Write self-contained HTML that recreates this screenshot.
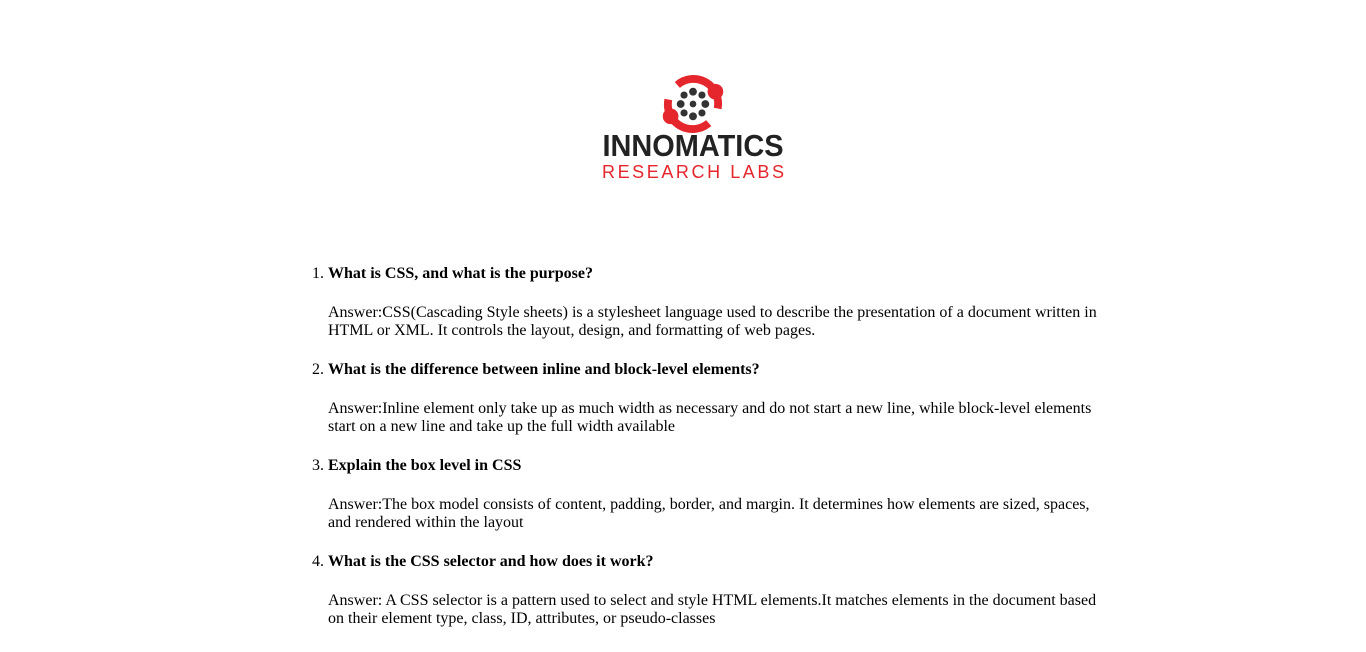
<!DOCTYPE html>
<html><head><meta charset="utf-8"><style>
body{margin:0;background:#fff;font-family:"Liberation Serif",serif;font-size:16px;color:#000;width:1366px;height:652px;overflow:hidden;position:relative}
.logo{position:absolute;left:598px;top:74px;width:190px;height:110px}
ol{position:absolute;left:288px;top:244px;width:812px;margin:0;padding:0 0 0 40px;box-sizing:border-box;line-height:18px}
h4{font-size:16px;margin:21px 0;line-height:18px}
p{margin:0;line-height:18px}
</style></head><body>
<svg class="logo" viewBox="0 0 190 110" xmlns="http://www.w3.org/2000/svg">
 <g transform="translate(95,30) scale(1.12)">
  <path d="M-22,-4 A22,22 0 0 0 14,17" fill="none" stroke="#e5262d" stroke-width="7"/>
  <path d="M22,4 A22,22 0 0 0 -14,-17" fill="none" stroke="#e5262d" stroke-width="7"/>
  <circle cx="-20" cy="11" r="7" fill="#e5262d"/>
  <circle cx="20" cy="-11" r="7" fill="#e5262d"/>
  <g fill="#333">
   <circle r="3"/>
   <circle cx="0" cy="-11" r="3.5"/><circle cx="0" cy="11" r="3.5"/>
   <circle cx="-11" cy="0" r="3.5"/><circle cx="11" cy="0" r="3.5"/>
   <circle cx="8" cy="-8" r="3.2"/><circle cx="-8" cy="8" r="3.2"/>
   <circle cx="-8" cy="-8" r="3.2"/><circle cx="8" cy="8" r="3.2"/>
  </g>
 </g>
 <text x="95" y="82" text-anchor="middle" font-family="Liberation Sans, sans-serif" font-weight="bold" font-size="31" fill="#222" textLength="181" lengthAdjust="spacingAndGlyphs">INNOMATICS</text>
 <text x="95" y="104" text-anchor="middle" font-family="Liberation Sans, sans-serif" font-size="18" fill="#e5262d" textLength="182" lengthAdjust="spacing">RESEARCH LABS</text>
</svg>
<ol>
<li><h4>What is CSS, and what is the purpose?</h4><p>Answer:CSS(Cascading Style sheets) is a stylesheet language used to describe the presentation of a document written in HTML or XML. It controls the layout, design, and formatting of web pages.</p></li>
<li><h4>What is the difference between inline and block-level elements?</h4><p>Answer:Inline element only take up as much width as necessary and do not start a new line, while block-level elements start on a new line and take up the full width available</p></li>
<li><h4>Explain the box level in CSS</h4><p>Answer:The box model consists of content, padding, border, and margin. It determines how elements are sized, spaces, and rendered within the layout</p></li>
<li><h4>What is the CSS selector and how does it work?</h4><p>Answer: A CSS selector is a pattern used to select and style HTML elements.It matches elements in the document based on their element type, class, ID, attributes, or pseudo-classes</p></li>
</ol>
</body></html>
